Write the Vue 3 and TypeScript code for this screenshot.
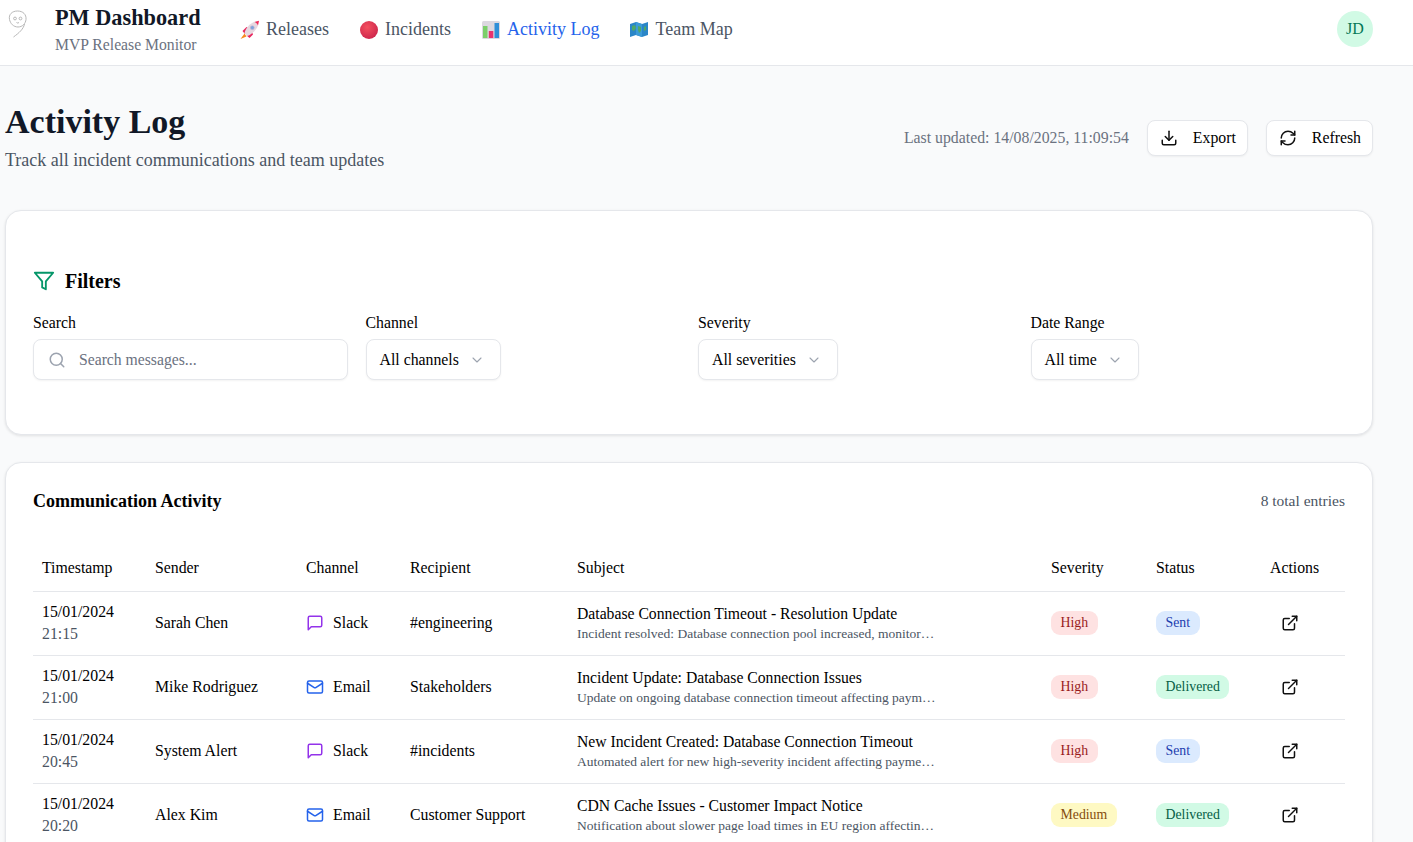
<script setup lang="ts">
interface Row {
  date: string
  time: string
  sender: string
  channel: 'Slack' | 'Email'
  recipient: string
  subject: string
  preview: string
  severity: 'High' | 'Medium'
  status: 'Sent' | 'Delivered'
}

const rows: Row[] = [
  { date: '15/01/2024', time: '21:15', sender: 'Sarah Chen', channel: 'Slack', recipient: '#engineering', subject: 'Database Connection Timeout - Resolution Update', preview: 'Incident resolved: Database connection pool increased, monitoring', severity: 'High', status: 'Sent' },
  { date: '15/01/2024', time: '21:00', sender: 'Mike Rodriguez', channel: 'Email', recipient: 'Stakeholders', subject: 'Incident Update: Database Connection Issues', preview: 'Update on ongoing database connection timeout affecting payment', severity: 'High', status: 'Delivered' },
  { date: '15/01/2024', time: '20:45', sender: 'System Alert', channel: 'Slack', recipient: '#incidents', subject: 'New Incident Created: Database Connection Timeout', preview: 'Automated alert for new high-severity incident affecting payment services', severity: 'High', status: 'Sent' },
  { date: '15/01/2024', time: '20:20', sender: 'Alex Kim', channel: 'Email', recipient: 'Customer Support', subject: 'CDN Cache Issues - Customer Impact Notice', preview: 'Notification about slower page load times in EU region affecting some users', severity: 'Medium', status: 'Delivered' },
]

const columns = ['Timestamp', 'Sender', 'Channel', 'Recipient', 'Subject', 'Severity', 'Status', 'Actions']
const filters = [
  { label: 'Channel', value: 'All channels' },
  { label: 'Severity', value: 'All severities' },
  { label: 'Date Range', value: 'All time' },
]
</script>

<template>
  <div class="page">
    <header class="topbar">
      <div class="brand">
        <svg class="logo" viewBox="0 0 20 28" fill="none" stroke="#b8b8b8" stroke-width="1">
          <path d="M1.500 9.500C0.500 4.500 4 1 9.500 1S18.500 4.500 18 9.500c-.4 4-3.500 7.500-8 7.500S2.300 13.500 1.500 9.500z" />
          <circle cx="7" cy="8.500" r="1.400" />
          <circle cx="12.500" cy="8.500" r="1.400" />
          <path d="M8.500 12.500l1.300.6 1.200-.6" />
          <path d="M16.500 14c-1 5-5.500 9-11 13" />
        </svg>
        <div class="brand-text">
          <div class="brand-title">PM Dashboard</div>
          <div class="brand-sub">MVP Release Monitor</div>
        </div>
      </div>
      <nav class="nav">
        <a class="nav-item">
          <svg class="emoji" viewBox="0 0 20 20">
            <path d="M4.500 13.500L0.500 19l6-2.500z" fill="#f58a1f" />
            <path d="M2.500 11l4-4 2 1-3.500 6z" fill="#e8265e" />
            <path d="M9.500 18l3.500-3.500-1-2.500-5.500 3.500z" fill="#e8265e" />
            <path d="M4.500 13C5.500 8 10 3.500 14 2l4.500-1-.7 5c-1.500 4-6.300 8.500-10.300 10z" fill="#e6d8e0" />
            <path d="M14.500 1.900L19 .8l-1 4.800c-.8-2-2-3.200-3.500-3.700z" fill="#f02a5a" />
            <circle cx="12.300" cy="7.700" r="2" fill="#7ea3dc" stroke="#c9b8cf" stroke-width=".6" />
          </svg>
          <span>Releases</span>
        </a>
        <a class="nav-item">
          <svg class="emoji" viewBox="0 0 20 20">
            <defs>
              <radialGradient id="ball" cx="0.400" cy="0.350" r="0.750">
                <stop offset="0" stop-color="#f4505f" />
                <stop offset="1" stop-color="#c9224a" />
              </radialGradient>
            </defs>
            <circle cx="10" cy="10" r="9" fill="url(#ball)" />
          </svg>
          <span>Incidents</span>
        </a>
        <a class="nav-item active">
          <svg class="emoji" viewBox="0 0 20 20">
            <rect x="1" y="1" width="18" height="18" rx="1.500" fill="#dcd8e0" />
            <rect x="2" y="6" width="4.500" height="12" fill="#7ccf6a" />
            <rect x="7.800" y="11" width="4.500" height="7" fill="#e8336f" />
            <rect x="13.500" y="3" width="4.500" height="15" fill="#2f8fd8" />
          </svg>
          <span>Activity Log</span>
        </a>
        <a class="nav-item">
          <svg class="emoji" viewBox="0 0 20 20">
            <path d="M1 4l6-2 6 2 6-2v13l-6 2-6-2-6 2z" fill="#2a86c8" />
            <path d="M7 2l6 2v13l-6-2z" fill="#3b9bd8" />
            <path d="M3 6l3-1 1 3-2 3-2-1zM9 6l3 1v4l-2 2-1-3zM15 7l2-1v4l-2 1z" fill="#4fa868" />
          </svg>
          <span>Team Map</span>
        </a>
      </nav>
      <div class="avatar">JD</div>
    </header>

    <main class="main">
      <section class="heading">
        <div>
          <h1>Activity Log</h1>
          <p>Track all incident communications and team updates</p>
        </div>
        <div class="heading-actions">
          <span class="updated">Last updated: 14/08/2025, 11:09:54</span>
          <button class="btn" type="button">
            <svg class="icon" viewBox="0 0 24 24">
              <path d="M21 15v4a2 2 0 0 1-2 2H5a2 2 0 0 1-2-2v-4" />
              <path d="M7 10l5 5 5-5" />
              <path d="M12 15V3" />
            </svg>
            Export
          </button>
          <button class="btn" type="button">
            <svg class="icon" viewBox="0 0 24 24">
              <path d="M3 12a9 9 0 0 1 9-9 9.750 9.750 0 0 1 6.740 2.740L21 8" />
              <path d="M21 3v5h-5" />
              <path d="M21 12a9 9 0 0 1-9 9 9.750 9.750 0 0 1-6.740-2.740L3 16" />
              <path d="M8 16H3v5" />
            </svg>
            Refresh
          </button>
        </div>
      </section>

      <section class="card filters">
        <h2 class="filters-title">
          <svg class="filter-icon" viewBox="0 0 24 24">
            <path d="M22 3H2l8 9.460V19l4 2v-8.540z" />
          </svg>
          Filters
        </h2>
        <div class="filter-grid">
          <div class="field">
            <label>Search</label>
            <div class="search">
              <svg class="search-icon" viewBox="0 0 24 24">
                <circle cx="11" cy="11" r="8" />
                <path d="M21 21l-4.300-4.300" />
              </svg>
              <span>Search messages...</span>
            </div>
          </div>
          <div v-for="f in filters" :key="f.label" class="field">
            <label>{{ f.label }}</label>
            <div class="select">
              <span>{{ f.value }}</span>
              <svg class="chev" viewBox="0 0 24 24"><path d="M6 9l6 6 6-6" /></svg>
            </div>
          </div>
        </div>
      </section>

      <section class="card activity">
        <div class="activity-head">
          <h2>Communication Activity</h2>
          <span>8 total entries</span>
        </div>
        <table>
          <colgroup>
            <col class="c1" /><col class="c2" /><col class="c3" /><col class="c4" />
            <col class="c5" /><col class="c6" /><col class="c7" /><col class="c8" />
          </colgroup>
          <thead>
            <tr><th v-for="c in columns" :key="c">{{ c }}</th></tr>
          </thead>
          <tbody>
            <tr v-for="r in rows" :key="r.time">
              <td>
                <div>{{ r.date }}</div>
                <div class="time">{{ r.time }}</div>
              </td>
              <td>{{ r.sender }}</td>
              <td>
                <div class="channel">
                  <svg v-if="r.channel === 'Slack'" class="ch slack" viewBox="0 0 24 24">
                    <path d="M21 15a2 2 0 0 1-2 2H7l-4 4V5a2 2 0 0 1 2-2h14a2 2 0 0 1 2 2z" />
                  </svg>
                  <svg v-else class="ch email" viewBox="0 0 24 24">
                    <rect x="2" y="4" width="20" height="16" rx="2" />
                    <path d="M22 7l-8.970 5.700a1.940 1.940 0 0 1-2.060 0L2 7" />
                  </svg>
                  {{ r.channel }}
                </div>
              </td>
              <td>{{ r.recipient }}</td>
              <td>
                <div class="subject">{{ r.subject }}</div>
                <div class="preview">{{ r.preview }}</div>
              </td>
              <td><span class="badge" :class="r.severity.toLowerCase()">{{ r.severity }}</span></td>
              <td><span class="badge" :class="r.status.toLowerCase()">{{ r.status }}</span></td>
              <td>
                <svg class="ext" viewBox="0 0 24 24">
                  <path d="M15 3h6v6" />
                  <path d="M10 14L21 3" />
                  <path d="M18 13v6a2 2 0 0 1-2 2H5a2 2 0 0 1-2-2V8a2 2 0 0 1 2-2h6" />
                </svg>
              </td>
            </tr>
          </tbody>
        </table>
      </section>
    </main>
  </div>
</template>

<style>
html, body { margin: 0; overflow: hidden; background: #f9fafb; }
</style>

<style scoped>
.page {
  height: 842px;
  overflow: hidden;
  background: #f9fafb;
  color: #000;
  font-family: "Liberation Serif", "Times New Roman", serif;
  font-size: 15.800px;
}
.topbar {
  height: 65px;
  display: flex;
  align-items: center;
  padding: 0 40px 0 8px;
  background: #fff;
  border-bottom: 1px solid #e5e7eb;
}
.brand { display: flex; align-items: flex-start; height: 65px; }
.logo { width: 20px; height: 28px; margin-top: 10px; margin-right: 27px; flex: none; }
.brand-text { width: 162px; }
.brand-title { font-size: 22.300px; font-weight: 700; line-height: 26px; margin-top: 5px; color: #111827; white-space: nowrap; }
.brand-sub { font-size: 15.700px; line-height: 20px; margin-top: 4px; color: #6b7280; white-space: nowrap; }
.nav { display: flex; gap: 30px; margin-left: 23px; flex: 1; height: 58px; padding-bottom: 6px; box-sizing: border-box; align-items: center; }
.nav-item { display: flex; align-items: center; gap: 6px; font-size: 18px; color: #4b5563; }
.nav-item.active { color: #2563eb; }
.emoji { width: 20px; height: 20px; flex: none; }
.avatar {
  width: 36px;
  height: 36px;
  margin-bottom: 7px;
  border-radius: 50%;
  background: #d1fae5;
  color: #047857;
  display: flex;
  align-items: center;
  justify-content: center;
  font-size: 16px;
}
.main { padding: 0 40px 0 5px; }
.heading { display: flex; justify-content: space-between; align-items: center; height: 144px; }
.heading > div:first-child { margin-top: -5px; }
h1 { margin: 0; font-size: 34px; line-height: 40px; font-weight: 700; color: #111827; }
.heading p { margin: 8px 0 0; font-size: 18px; line-height: 20px; color: #4b5563; }
.heading-actions { display: flex; align-items: center; gap: 18px; margin-top: -1px; }
.updated { font-size: 15.800px; color: #6b7280; }
.btn {
  display: flex;
  align-items: center;
  gap: 15px;
  height: 36px;
  padding: 0 11px 0 12px;
  background: #fff;
  border: 1px solid #e5e7eb;
  border-radius: 8px;
  box-shadow: 0 1px 2px rgba(0, 0, 0, 0.05);
  font: inherit;
  color: #000;
}
.icon { width: 18px; height: 18px; fill: none; stroke: #111; stroke-width: 2; stroke-linecap: round; stroke-linejoin: round; }
.card {
  background: #fff;
  border: 1px solid #e5e7eb;
  border-radius: 16px;
  box-shadow: 0 1px 3px rgba(0, 0, 0, 0.1);
  box-sizing: border-box;
}
.filters { height: 225px; padding: 59px 27px 0; margin-bottom: 27px; }
.filters-title { display: flex; align-items: center; gap: 10px; margin: 0; font-size: 20px; line-height: 22px; font-weight: 700; }
.filter-icon { width: 22px; height: 22px; fill: none; stroke: #059669; stroke-width: 2; stroke-linejoin: round; }
.filter-grid { display: grid; grid-template-columns: repeat(4, 1fr); gap: 18px; margin-top: 22px; }
.field { display: flex; flex-direction: column; align-items: flex-start; }
.field label { line-height: 18px; margin-bottom: 7px; }
.search, .select {
  height: 41px;
  box-sizing: border-box;
  display: flex;
  align-items: center;
  background: #fff;
  border: 1px solid #e5e7eb;
  border-radius: 8px;
  box-shadow: 0 1px 2px rgba(0, 0, 0, 0.05);
}
.search { width: 100%; padding-left: 14px; gap: 13px; color: #6b7280; font-size: 15.700px; }
.search-icon { width: 18px; height: 18px; fill: none; stroke: #9ca3af; stroke-width: 2; stroke-linecap: round; }
.select { padding: 0 15px 0 13px; gap: 10px; font-size: 15.800px; }
.chev { width: 16px; height: 16px; fill: none; stroke: #9ca3af; stroke-width: 1.600; stroke-linecap: round; stroke-linejoin: round; }
.activity { padding: 0 27px; height: 420px; }
.activity-head { display: flex; justify-content: space-between; align-items: center; height: 77px; }
.activity-head h2 { margin: 0; font-size: 18px; font-weight: 700; }
.activity-head span { font-size: 15.500px; color: #4b5563; margin-bottom: 2px; }
table { width: 100%; table-layout: fixed; border-collapse: collapse; }
.c1 { width: 113px; } .c2 { width: 151px; } .c3 { width: 104px; } .c4 { width: 167px; }
.c5 { width: 474px; } .c6 { width: 105px; } .c7 { width: 114px; } .c8 { width: 84px; }
th { height: 51px; padding: 6px 9px 0; box-sizing: border-box; text-align: left; font-weight: 400; border-bottom: 1px solid #e5e7eb; }
td { height: 64px; padding: 0 9px; box-sizing: border-box; border-bottom: 1px solid #e5e7eb; line-height: 22px; }
.time { color: #4b5563; }
.channel { display: flex; align-items: center; gap: 9px; }
.ch { width: 18px; height: 18px; fill: none; stroke-width: 2; stroke-linecap: round; stroke-linejoin: round; flex: none; }
.slack { stroke: #9333ea; }
.email { stroke: #2563eb; }
.subject { font-size: 15.700px; line-height: 20px; white-space: nowrap; }
.preview { width: 359px; margin-top: 1px; font-size: 13.500px; line-height: 18px; color: #4b5563; white-space: nowrap; overflow: hidden; text-overflow: ellipsis; }
.badge { display: inline-block; height: 24px; line-height: 24px; padding: 0 9.500px; border-radius: 9px; font-size: 13.800px; vertical-align: middle; }
.high { background: #fee2e2; color: #991b1b; }
.medium { background: #fef9c3; color: #854d0e; }
.sent { background: #dbeafe; color: #1e40af; }
.delivered { background: #d1fae5; color: #065f46; }
.ext { display: block; width: 18px; height: 18px; margin-left: 11px; fill: none; stroke: #111; stroke-width: 2; stroke-linecap: round; stroke-linejoin: round; }
</style>
